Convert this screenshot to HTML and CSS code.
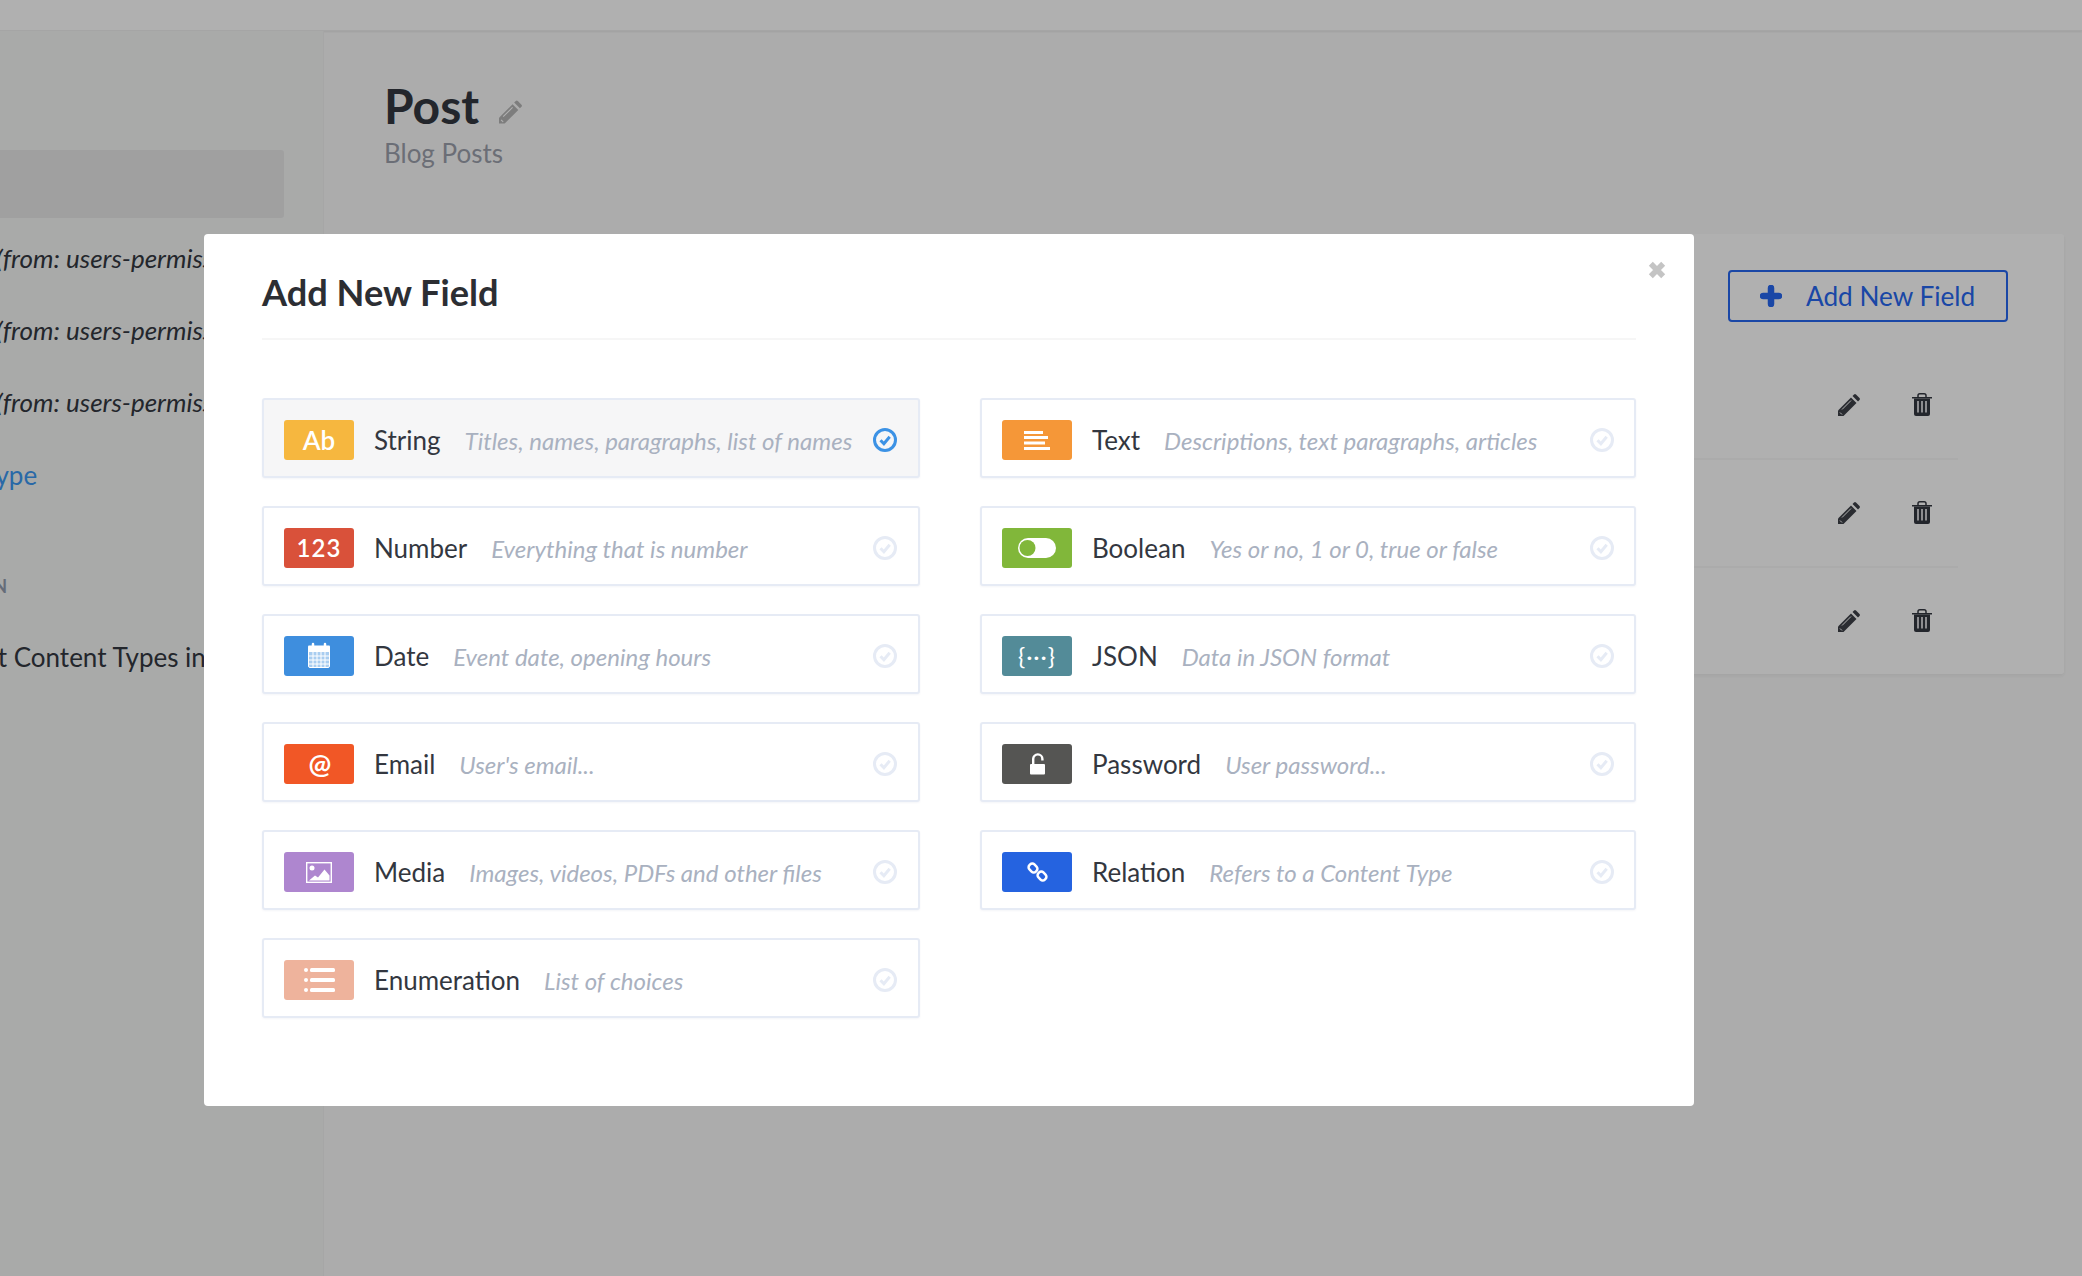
FILE: index.html
```html
<!DOCTYPE html>
<html lang="en">
<head>
<meta charset="utf-8">
<title>Add New Field</title>
<link rel="stylesheet" href="styles.css">
</head>
<body>
<svg class="defs" width="0" height="0" aria-hidden="true">
  <symbol id="check" viewBox="0 0 24 24"><circle cx="12" cy="12" r="10.500" fill="none" stroke="currentColor" stroke-width="3"/><path d="M7.500 12.200l3.400 3.600 5.800-7" fill="none" stroke="currentColor" stroke-width="3"/></symbol>
  <symbol id="pencil" viewBox="0 0 22 22"><path d="M0 22v-5.500L13 3.500 18.500 9 5.500 22z"/><path d="M14.500 2L16 .5a1.500 1.500 0 0 1 2 0L21.500 4a1.500 1.500 0 0 1 0 2L20 7.500z"/><path class="pencil-line" d="M4 15.500l9-9M2 18.500l2 2"/></symbol>
  <symbol id="trash" viewBox="0 0 20 23"><path d="M0 4h20v1.500H0z"/><path d="M6 4.500V2.600C6 1.400 6.800.8 7.800.8h4.400c1 0 1.800.6 1.800 1.800v1.900" fill="none" stroke="currentColor" stroke-width="1.500"/><path d="M2 5.500h16V21a2 2 0 0 1-2 2H4a2 2 0 0 1-2-2z"/><path class="trash-slit" d="M6 8v11.500M10 8v11.500M14 8v11.500"/></symbol>
</svg>

<div class="app">
  <header class="topbar"></header>
  <div class="layout">
    <aside class="sidebar">
      <div class="side-search"></div>
      <p class="side-item">(from: users-permissions)</p>
      <p class="side-item">(from: users-permissions)</p>
      <p class="side-item">(from: users-permissions)</p>
      <p class="side-link">Add a Content Type</p>
      <p class="side-heading">DOCUMENTATION</p>
      <p class="side-text">about Content Types in our documentation</p>
    </aside>
    <main class="main">
      <div class="title-row">
        <h1 class="page-title">Post</h1>
        <svg class="title-pencil"><use href="#pencil"/></svg>
      </div>
      <p class="page-sub">Blog Posts</p>
      <section class="list-card">
        <div class="list-head">
          <button class="add-btn" type="button">
            <svg class="plus" viewBox="0 0 22 22"><path d="M11 3v16M3 11h16"/></svg>
            <span>Add New Field</span>
          </button>
        </div>
        <div class="list-row"><svg class="act-pencil"><use href="#pencil"/></svg><svg class="act-trash"><use href="#trash"/></svg></div>
        <div class="list-row"><svg class="act-pencil"><use href="#pencil"/></svg><svg class="act-trash"><use href="#trash"/></svg></div>
        <div class="list-row last"><svg class="act-pencil"><use href="#pencil"/></svg><svg class="act-trash"><use href="#trash"/></svg></div>
      </section>
    </main>
  </div>
</div>

<div class="overlay"></div>

<div class="modal">
  <svg class="close" viewBox="0 0 16 16"><path d="M2.500 2.500l11 11M13.500 2.500l-11 11"/></svg>
  <h2 class="modal-title">Add New Field</h2>
  <div class="field-grid">
    <div class="field active">
      <span class="badge b-string">Ab</span>
      <span class="f-name">String</span><span class="f-desc">Titles, names, paragraphs, list of names</span>
      <svg class="f-check"><use href="#check"/></svg>
    </div>
    <div class="field">
      <span class="badge b-text"><svg class="glyph" viewBox="0 0 70 40"><path d="M22 11h19v3H22zM22 16h24v3H22zM22 21.500h21v3H22zM22 27h26v3H22z" fill="#fff"/></svg></span>
      <span class="f-name">Text</span><span class="f-desc">Descriptions, text paragraphs, articles</span>
      <svg class="f-check"><use href="#check"/></svg>
    </div>
    <div class="field">
      <span class="badge b-number">123</span>
      <span class="f-name">Number</span><span class="f-desc">Everything that is number</span>
      <svg class="f-check"><use href="#check"/></svg>
    </div>
    <div class="field">
      <span class="badge b-boolean"><svg class="glyph" viewBox="0 0 70 40"><rect x="16" y="10" width="38" height="20" rx="10" fill="#fff"/><circle cx="25.500" cy="20" r="8" fill="#81b73a"/></svg></span>
      <span class="f-name">Boolean</span><span class="f-desc">Yes or no, 1 or 0, true or false</span>
      <svg class="f-check"><use href="#check"/></svg>
    </div>
    <div class="field">
      <span class="badge b-date"><svg class="glyph" viewBox="0 0 70 40"><rect x="24.500" y="10.500" width="21" height="21" rx="1.500" fill="#a9cdf0" stroke="#fff"/><path d="M24 10.500a1 1 0 0 1 1-1h20a1 1 0 0 1 1 1V16H24z" fill="#fff"/><path d="M29 8v5M41 8v5" stroke="#fff" stroke-width="2.500" stroke-linecap="round"/><path d="M29 16v15M33 16v15M37 16v15M41 16v15M25 20h20M25 24h20M25 28h20" stroke="#fff"/></svg></span>
      <span class="f-name">Date</span><span class="f-desc">Event date, opening hours</span>
      <svg class="f-check"><use href="#check"/></svg>
    </div>
    <div class="field">
      <span class="badge b-json"><span class="json-text">{···}</span></span>
      <span class="f-name">JSON</span><span class="f-desc">Data in JSON format</span>
      <svg class="f-check"><use href="#check"/></svg>
    </div>
    <div class="field">
      <span class="badge b-email"><span class="at">@</span></span>
      <span class="f-name">Email</span><span class="f-desc">User's email...</span>
      <svg class="f-check"><use href="#check"/></svg>
    </div>
    <div class="field">
      <span class="badge b-password"><svg class="glyph" viewBox="0 0 70 40"><rect x="28" y="20" width="15" height="10.500" rx="1" fill="#fff"/><path d="M31.200 21v-6a4.600 4.600 0 0 1 9.200 0v1.500" fill="none" stroke="#fff" stroke-width="2.400"/></svg></span>
      <span class="f-name">Password</span><span class="f-desc">User password...</span>
      <svg class="f-check"><use href="#check"/></svg>
    </div>
    <div class="field">
      <span class="badge b-media"><svg class="glyph" viewBox="0 0 70 40"><rect x="22.700" y="10.700" width="24.600" height="19.600" fill="none" stroke="#fff" stroke-width="1.400"/><circle cx="28" cy="16" r="2.500" fill="#fff"/><path d="M25 28.500l6-5 3 2 6.500-8 5 6v5z" fill="#fff"/></svg></span>
      <span class="f-name">Media</span><span class="f-desc">Images, videos, PDFs and other files</span>
      <svg class="f-check"><use href="#check"/></svg>
    </div>
    <div class="field">
      <span class="badge b-relation"><svg class="glyph" viewBox="0 0 70 40"><g fill="none" stroke="#fff" stroke-width="2.500"><rect x="26.500" y="12.500" width="9" height="7" rx="3" transform="rotate(45 31 16)"/><rect x="35.500" y="20.500" width="9" height="7" rx="3" transform="rotate(45 40 24)"/></g></svg></span>
      <span class="f-name">Relation</span><span class="f-desc">Refers to a Content Type</span>
      <svg class="f-check"><use href="#check"/></svg>
    </div>
    <div class="field">
      <span class="badge b-enum"><svg class="glyph" viewBox="0 0 70 40"><g fill="#fff"><circle cx="22" cy="10" r="2"/><circle cx="22" cy="20" r="2"/><circle cx="22" cy="30" r="2"/><rect x="26" y="8" width="25" height="4" rx="1.500"/><rect x="26" y="18" width="25" height="4" rx="1.500"/><rect x="26" y="28" width="25" height="4" rx="1.500"/></g></svg></span>
      <span class="f-name">Enumeration</span><span class="f-desc">List of choices</span>
      <svg class="f-check"><use href="#check"/></svg>
    </div>
  </div>
</div>
</body>
</html>
```
FILE: styles.css
```css
* { box-sizing: border-box; }
html, body { margin: 0; height: 100%; overflow: hidden; }
body { font-family: Lato, "Open Sans", sans-serif; color: #333740; background: #f7f7f7; }
p, h1, h2 { margin: 0; }
.defs { position: absolute; }

.app { display: flex; flex-direction: column; height: 1276px; }
.topbar { height: 31px; flex: none; background: #fcfcfc; border-bottom: 1px solid #ececec; box-shadow: 0 1px 2px rgba(0,0,0,.08); }
.layout { flex: 1; display: flex; min-height: 0; }

.sidebar { width: 324px; flex: none; background: #f2f4f3; border-right: 1px solid #eeeeee; overflow: hidden; white-space: nowrap; font-size: 26px; }
.side-search { height: 68px; width: 284px; margin: 119px 0 4px; background: #e6e6e6; border-radius: 0 3px 3px 0; }
.side-item { height: 72px; line-height: 72px; font-style: italic; margin-left: -4px; }
.side-link { height: 72px; line-height: 72px; color: #3c97f0; margin: 1px 0 0 -189px; }
.side-heading { margin-top: 60px; height: 30px; line-height: 30px; font-size: 18px; font-weight: 700; color: #919bae; margin-left: -153px; }
.side-text { margin-top: 41px; line-height: 30px; margin-left: -59px; }

.main { flex: 1; min-width: 0; padding: 0 18px 0 60px; }
.title-row { display: flex; align-items: center; height: 60px; margin-top: 45px; }
.page-title { font-size: 48px; font-weight: 700; line-height: 60px; }
.title-pencil { width: 23px; height: 24px; margin: 12px 0 0 20px; fill: #b4b4b4; color: #b4b4b4; }
.page-sub { font-size: 26px; line-height: 32px; color: #9a9eaa; margin-top: 1px; }

.list-card { margin-top: 65px; height: 440px; background: #fdfdfd; border-radius: 3px; box-shadow: 0 2px 4px rgba(0,0,0,.06); }
.list-head { display: flex; justify-content: flex-end; height: 118px; padding: 36px 56px 0 0; }
.add-btn { width: 280px; height: 52px; display: flex; align-items: center; padding: 0 0 0 30px; gap: 24px; background: transparent; border: 2px solid #2666ee; border-radius: 4px; color: #2666ee; font: 400 26.200px Lato, sans-serif; }
.plus { width: 22px; height: 22px; fill: none; stroke: #2666ee; stroke-width: 6.500; stroke-linecap: round; flex: none; }
.list-row { height: 108px; display: flex; align-items: center; justify-content: flex-end; gap: 52px; margin-right: 106px; padding-right: 26px; border-bottom: 2px solid #f5f5f5; }
.list-row.last { border-bottom: 0; height: 106px; }
.act-pencil { width: 22px; height: 22px; fill: #3d4047; color: #3d4047; }
.act-trash { width: 20px; height: 23px; margin-top: -2px; fill: #333740; color: #333740; }
.pencil-line { fill: none; stroke: #fdfdfd; stroke-width: 1; }
.trash-slit { fill: none; stroke: #fdfdfd; stroke-width: 1.500; }

.overlay { position: absolute; inset: 0; background: rgba(0,0,0,.3); }

.modal { position: absolute; left: 204px; top: 234px; width: 1490px; height: 872px; padding: 0 58px; background: #fff; border-radius: 4px; }
.close { position: absolute; left: 1444px; top: 27px; width: 18px; height: 18px; fill: none; stroke: #c4c4c4; stroke-width: 5; }
.modal-title { height: 106px; padding-top: 33px; font-size: 36.200px; line-height: 50px; font-weight: 700; color: #2c2e33; border-bottom: 2px solid #f6f6f6; }

.field-grid { display: grid; grid-template-columns: 658px 656px; column-gap: 60px; row-gap: 28px; margin-top: 58px; }
.field { display: flex; align-items: center; height: 80px; padding: 4px 21px 0 20px; background: #fff; border: 2px solid #e6ebf5; border-radius: 3px; box-shadow: 0 1px 2px rgba(40,60,110,.05); color: #e6ebf5; }
.field:nth-child(even) { padding-right: 20px; }
.field.active { background: #f6f6f7; color: #3c92e5; }
.badge { width: 70px; height: 40px; flex: none; display: flex; align-items: center; justify-content: center; border-radius: 3px; color: #fff; font-size: 24px; font-weight: 600; line-height: 40px; }
.glyph { width: 70px; height: 40px; display: block; }
.b-string { background: #f6b73f; font-size: 26px; }
.b-number { background: #d9513a; letter-spacing: 1px; }
.b-date { background: #3e8ede; }
.b-email { background: #f15726; padding-left: 2px; }
.b-media { background: #ae86cf; }
.b-enum { background: #eeb39c; }
.b-text { background: #f59738; }
.b-boolean { background: #81b73a; }
.b-json { background: #538b98; }
.b-password { background: #555553; }
.b-relation { background: #2563e0; }
.at { font-size: 27px; font-weight: 700; }
.json-text { font-size: 24px; letter-spacing: 1px; font-weight: 400; }
.f-name { margin-left: 20px; font-size: 26px; line-height: 40px; color: #333740; white-space: nowrap; }
.f-desc { margin-left: 24px; font-size: 24px; line-height: 40px; font-style: italic; font-weight: 400; color: #a9b1c0; padding-top: 2px; white-space: nowrap; }
.f-check { margin-left: auto; width: 24px; height: 24px; flex: none; }
```
